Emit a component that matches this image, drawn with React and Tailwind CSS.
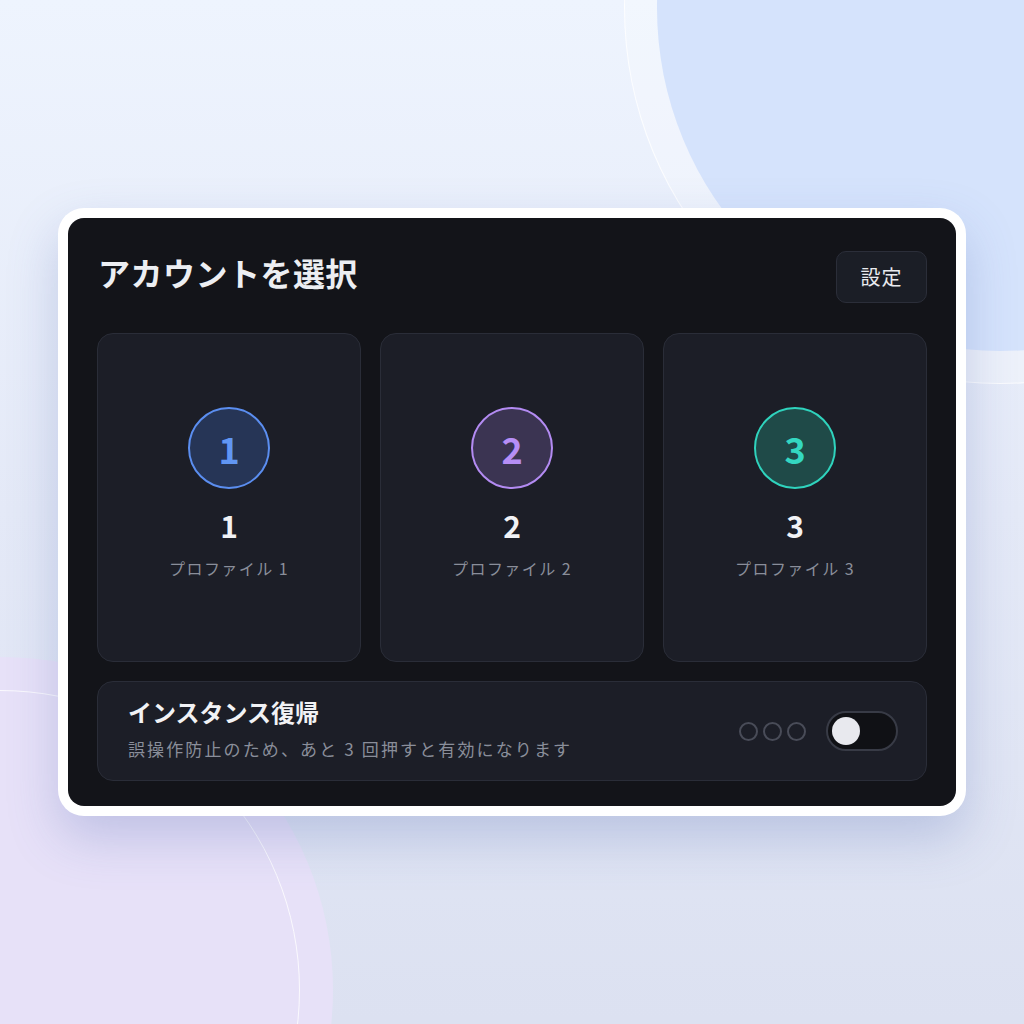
import React from "react";

const font = { fontFamily: '"Noto Sans CJK JP", "Noto Sans", sans-serif' };

function ProfileCard({ n, ring, fill, num }) {
  return (
    <div className="flex h-[329px] flex-col items-center justify-center rounded-[16px] border border-[#2a2d38] bg-[#1c1e27] pb-[10px]">
      <div
        className={`flex h-[82px] w-[82px] items-center justify-center rounded-full border-2 ${ring} ${fill}`}
      >
        <span className={`text-[36px] font-bold leading-none ${num}`}>{n}</span>
      </div>
      <div className="mt-[16px] text-[30px] font-bold leading-[40px] text-[#f1f2f5]">{n}</div>
      <div className="mt-[12px] text-[16px] leading-[22px] tracking-[0.09em] text-[#8a8e9a]">
        プロファイル {n}
      </div>
    </div>
  );
}

export default function App() {
  return (
    <div
      className="relative flex h-[1024px] w-full items-center justify-center overflow-hidden bg-gradient-to-b from-[#eef4fe] via-[#e4e9f7] to-[#dce1f1]"
      style={font}
    >
      {/* decorative background shapes */}
      <div className="absolute left-[624px] top-[-368px] h-[752px] w-[752px] rounded-full border-[1.5px] border-white/80 bg-white/25" />
      <div className="absolute left-[657px] top-[-335px] h-[686px] w-[686px] rounded-full bg-[#d5e3fc]" />
      <div className="absolute left-[-333px] top-[657px] h-[666px] w-[666px] rounded-full bg-[#e7e1f8]" />
      <div className="absolute left-[-300px] top-[690px] h-[600px] w-[600px] rounded-full border-[1.5px] border-white/80" />

      {/* card */}
      <div className="relative rounded-[26px] bg-white p-[10px] shadow-[0_22px_50px_rgba(90,110,180,0.28)]">
        <div className="w-[888px] rounded-[16px] bg-[#131419] px-[29px] pb-[25px] pt-[32px]">
          <div className="mb-[29px] flex items-center justify-between">
            <h1 className="mb-[10px] pl-[1px] text-[32px] font-bold leading-[44px] tracking-[0.015em] text-[#eceef2]">
              アカウントを選択
            </h1>
            <button className="flex h-[52px] w-[91px] items-center justify-center rounded-[10px] border border-[#2b2e39] bg-[#1b1e26] text-[20px] tracking-[0.05em] text-[#e9ebef]">
              設定
            </button>
          </div>

          <div className="grid grid-cols-3 gap-[19px]">
            <ProfileCard n="1" ring="border-[#5b8ef0]" fill="bg-[#263556]" num="text-[#6196f3]" />
            <ProfileCard n="2" ring="border-[#b38bf2]" fill="bg-[#3b3452]" num="text-[#b68ef6]" />
            <ProfileCard n="3" ring="border-[#2fd3bd]" fill="bg-[#1f4a48]" num="text-[#34d7c1]" />
          </div>

          <div className="mt-[19px] flex h-[100px] items-center justify-between rounded-[16px] border border-[#2a2d38] bg-[#1c1e27] pl-[30px] pr-[28px]">
            <div className="flex flex-col pb-[6px]">
              <div className="text-[24px] font-bold leading-[32px] text-[#f1f2f5]">
                インスタンス復帰
              </div>
              <div className="mt-[9px] text-[17px] leading-[24px] tracking-[0.125em] text-[#8a8e9a]">
                誤操作防止のため、あと 3 回押すと有効になります
              </div>
            </div>
            <div className="flex items-center">
              <div className="flex items-center gap-[5px]">
                <span className="h-[19px] w-[19px] rounded-full border-2 border-[#494c58]" />
                <span className="h-[19px] w-[19px] rounded-full border-2 border-[#494c58]" />
                <span className="h-[19px] w-[19px] rounded-full border-2 border-[#494c58]" />
              </div>
              <div className="ml-[20px] flex h-[40px] w-[72px] items-center rounded-full border-2 border-[#383b46] bg-[#101115] px-[4px]">
                <span className="h-[28px] w-[28px] rounded-full bg-[#e8e9ee]" />
              </div>
            </div>
          </div>
        </div>
      </div>
    </div>
  );
}
